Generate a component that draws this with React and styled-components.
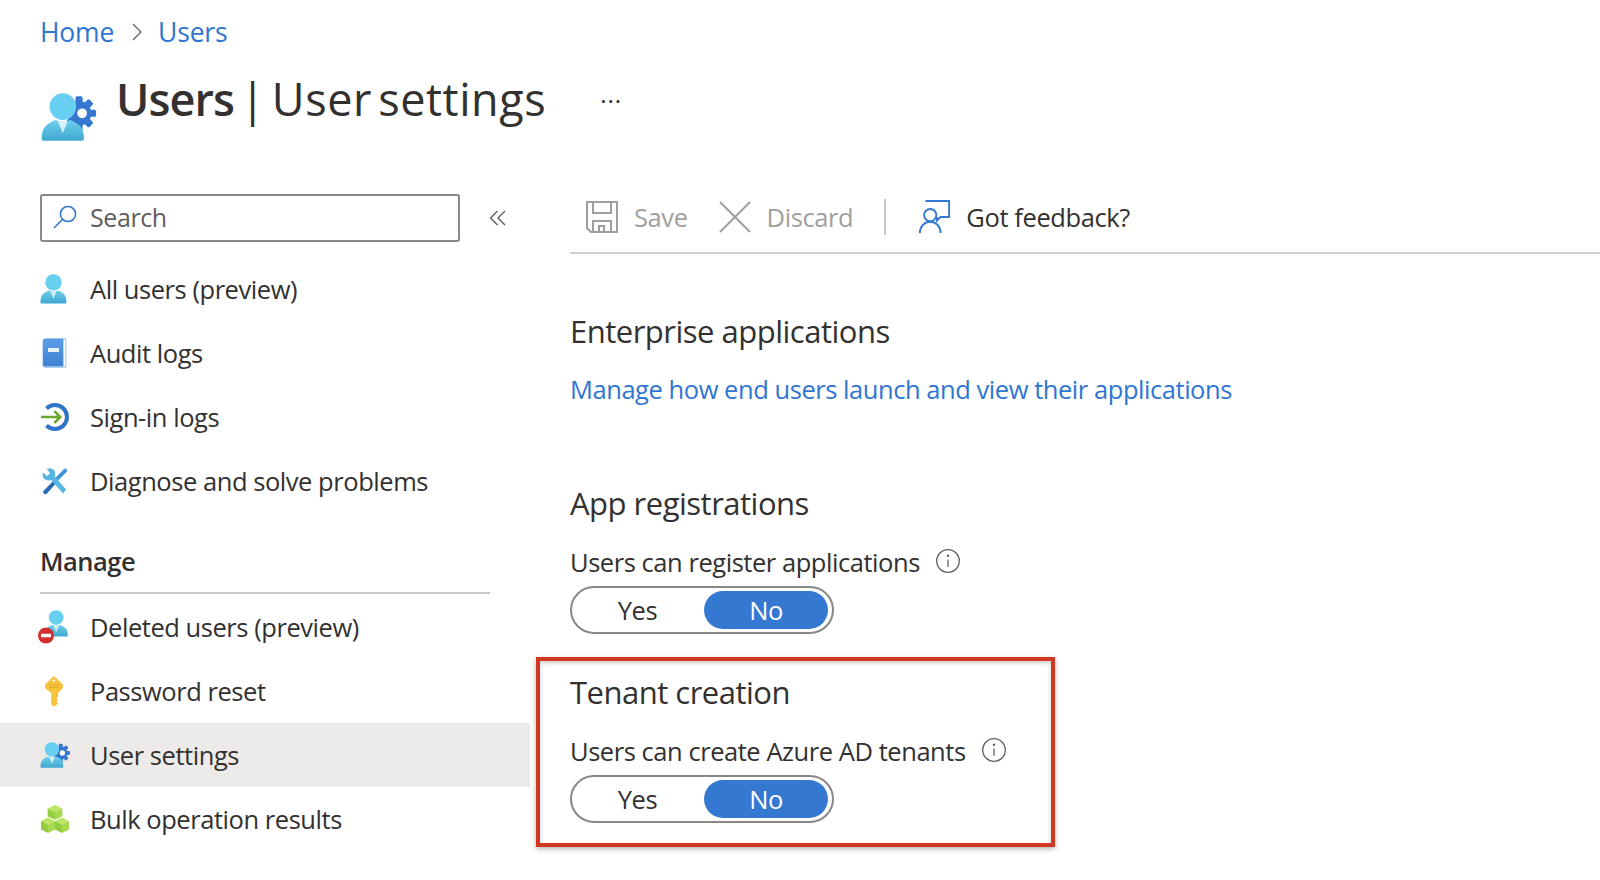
import { createGlobalStyle } from 'styled-components';
import styled from 'styled-components';

const GlobalStyle = createGlobalStyle`
  html, body {
    margin: 0;
    padding: 0;
    background: #fff;
    font-family: "Open Sans", "Noto Sans", sans-serif;
    color: #323130;
    overflow: hidden;
  }
`;

const Page = styled.div`
  width: 1600px;
  height: 880px;
  overflow: hidden;
`;

const Crumbs = styled.nav`
  display: flex;
  align-items: center;
  height: 64px;
  padding-left: 40px;
  font-size: 26.5px;
  letter-spacing: -0.2px;
  color: #2f76d2;
`;

const CrumbSep = styled.svg`
  width: 14px;
  height: 22px;
  margin: 0 14px 0 16px;
  fill: none;
  stroke: #605e5c;
  stroke-width: 1.3;
`;

const TitleBar = styled.header`
  display: flex;
  align-items: flex-start;
  height: 130px;
  padding-left: 40px;
`;

const TitleIcon = styled.div`
  width: 57px;
  height: 48px;
  margin: 29px 19px 0 0;
  flex: none;
`;

const Title = styled.h1`
  margin: 5px 0 0;
  font-size: 45px;
  line-height: 60px;
  font-weight: 400;
  letter-spacing: 0.55px;
  word-spacing: -6px;
  color: #323130;

  b {
    font-weight: 600;
    letter-spacing: -0.9px;
  }
`;

const Ellipsis = styled.span`
  margin: 10px 0 0 54px;
  font-size: 24px;
  line-height: 40px;
  letter-spacing: 1px;
  color: #323130;
`;

const Body = styled.div`
  display: grid;
  grid-template-columns: 530px 1fr;
`;

const Sidebar = styled.aside`
  display: flex;
  flex-direction: column;
`;

const SearchRow = styled.div`
  display: flex;
  align-items: center;
  padding-left: 40px;
  margin-bottom: 15px;
`;

const SearchBox = styled.div`
  display: flex;
  align-items: center;
  gap: 12px;
  box-sizing: border-box;
  width: 420px;
  height: 48px;
  padding: 0 0 2px 10px;
  border: 2px solid #8a8886;
  border-radius: 3px;
  font-size: 25px;
  letter-spacing: -0.4px;
  color: #605e5c;
`;

const Collapse = styled.svg`
  width: 18px;
  height: 16px;
  margin-left: 29px;
  fill: none;
  stroke: #605e5c;
  stroke-width: 1.4;
`;

const Row = styled.div`
  display: flex;
  align-items: center;
  height: 64px;
  padding-left: 40px;
  font-size: 25.5px;
  letter-spacing: -0.45px;
  color: #323130;
  background: ${(props) => (props.$active ? '#edebe9' : 'transparent')};
`;

const RowIcon = styled.span`
  display: flex;
  align-items: center;
  width: 28px;
  height: 34px;
  margin-right: 22px;
  flex: none;

  svg {
    overflow: visible;
  }
`;

const GroupTitle = styled.div`
  box-sizing: border-box;
  display: flex;
  align-items: center;
  width: 450px;
  height: 56px;
  margin: 25px 0 1px 40px;
  padding-bottom: 8px;
  border-bottom: 2px solid #c8c6c4;
  font-size: 25.5px;
  font-weight: 600;
  letter-spacing: -0.5px;
`;

const Main = styled.main`
  display: flex;
  flex-direction: column;
  padding-left: 40px;
`;

const Toolbar = styled.div`
  display: flex;
  align-items: center;
  box-sizing: border-box;
  height: 60px;
  padding: 0 0 12px 15px;
  border-bottom: 2px solid #d2d0ce;
  font-size: 25.5px;
  letter-spacing: -0.4px;
`;

const ToolButton = styled.span`
  display: flex;
  align-items: center;
  margin-left: ${(props) => props.$gap || 0}px;
  color: ${(props) => (props.$disabled ? '#a19f9d' : '#323130')};
`;

const ToolIcon = styled.svg`
  width: 34px;
  height: 34px;
  margin-right: 15px;
  flex: none;
`;

const ToolDivider = styled.span`
  width: 2px;
  height: 36px;
  margin: 0 31px;
  background: #c8c6c4;
`;

const Section = styled.section`
  position: relative;
  display: flex;
  flex-direction: column;
  align-items: flex-start;
  padding-top: ${(props) => props.$top}px;
`;

const Heading = styled.h2`
  margin: 0;
  font-size: 31px;
  line-height: 42px;
  font-weight: 400;
  letter-spacing: -0.5px;
  color: #323130;
`;

const ManageLink = styled.a`
  margin-top: 17px;
  font-size: 25.5px;
  line-height: 40px;
  letter-spacing: -0.45px;
  color: #2f76d2;
`;

const FieldLabel = styled.div`
  display: flex;
  align-items: center;
  height: 40px;
  margin-top: 18px;
  font-size: 25.5px;
  letter-spacing: -0.45px;
  color: #323130;
`;

const InfoIcon = styled.svg`
  width: 26px;
  height: 26px;
  margin: -2px 0 0 ${(props) => props.$gap}px;
  fill: none;
  stroke: #605e5c;
  stroke-width: 1.3;
`;

const Toggle = styled.div`
  display: flex;
  align-items: center;
  box-sizing: border-box;
  width: 264px;
  height: 48px;
  margin-top: 4px;
  padding: 0 4px 0 3px;
  border: 2px solid #8a8886;
  border-radius: 24px;
  font-size: 25.5px;
  letter-spacing: -0.4px;
`;

const ToggleOption = styled.span`
  display: flex;
  flex: ${(props) => (props.$on ? '0 0 124px' : '1')};
  align-items: center;
  justify-content: center;
  box-sizing: border-box;
  height: 38px;
  padding-right: ${(props) => (props.$on ? 0 : 4)}px;
  border-radius: 19px;
  background: ${(props) => (props.$on ? '#3478d1' : 'transparent')};
  color: ${(props) => (props.$on ? '#fff' : '#323130')};
`;

const Callout = styled.div`
  position: absolute;
  top: 23px;
  left: -34px;
  box-sizing: border-box;
  width: 519px;
  height: 190px;
  border: 4px solid #d0391f;
  box-shadow: 0 2px 5px rgba(0, 0, 0, 0.3), inset 0 2px 4px rgba(0, 0, 0, 0.2);
  pointer-events: none;
`;

function PersonShape({ prefix }) {
  return (
    <>
      <defs>
        <linearGradient id={`${prefix}-body`} x1="0" y1="0" x2="0" y2="1">
          <stop offset="0" stopColor="#6fd0ee" />
          <stop offset="1" stopColor="#3fa7cf" />
        </linearGradient>
      </defs>
      <path d="M0.5 28.4C.5 23.2 1.6 19.4 9 16.6c2.8 1.4 6.2 1.4 9 0 7.4 2.8 8.5 6.6 8.5 11.8 0 .6-.4 1-1 1h-24c-.6 0-1-.4-1-1z" fill={`url(#${prefix}-body)`} />
      <circle cx="13.5" cy="8.4" r="8.2" fill="#68cff0" />
      <path d="M10.4 17.2h6.2l-3.1 7.6z" fill="#d3f0f8" />
    </>
  );
}

function PersonIcon() {
  return (
    <svg width="28" height="30" viewBox="0 0 28 30">
      <PersonShape prefix="all" />
    </svg>
  );
}

function GearPersonIcon({ prefix, width, height }) {
  return (
    <svg width={width} height={height} viewBox="0 0 34 29.6">
      <g fill="#3478d1">
        <circle cx="23.5" cy="12.5" r="7.6" />
        <rect x="21.3" y="2" width="4.4" height="21" rx="1" />
        <rect x="13" y="10.3" width="21" height="4.4" rx="1" />
        <rect x="21.3" y="2" width="4.4" height="21" rx="1" transform="rotate(45 23.5 12.5)" />
        <rect x="21.3" y="2" width="4.4" height="21" rx="1" transform="rotate(-45 23.5 12.5)" />
      </g>
      <circle cx="25.4" cy="12.5" r="3" fill="#fff" />
      <PersonShape prefix={prefix} />
    </svg>
  );
}

function BookIcon() {
  return (
    <svg width="28" height="30" viewBox="0 0 28 30">
      <defs>
        <linearGradient id="book-cover" x1="0" y1="0" x2="0" y2="1">
          <stop offset="0" stopColor="#5c9fe8" />
          <stop offset="1" stopColor="#3f80d2" />
        </linearGradient>
      </defs>
      <path d="M3 3.2C3 1.6 4 .7 5.4.7h20.4v28.6H5C3.8 29.3 3 28.4 3 27z" fill="#fff" stroke="#7fb2e6" strokeWidth="0.8" />
      <path d="M3 3c0-1.4 1-2.3 2.4-2.3h18v27.8H5c-1.2 0-2-.8-2-2.2z" fill="url(#book-cover)" />
      <rect x="8" y="10" width="11" height="4" fill="#e8f2fc" />
    </svg>
  );
}

function SignInIcon() {
  return (
    <svg width="28" height="30" viewBox="0 0 28 30" fill="none">
      <path d="M6.5 6.5A12 12 0 1 1 6.5 23.5" stroke="#2f76c8" strokeWidth="4" />
      <path d="M1 15h19M14.4 9.2l5.8 5.8-5.8 5.8" stroke="#6aa82e" strokeWidth="2.6" />
    </svg>
  );
}

function ToolsIcon() {
  return (
    <svg width="28" height="30" viewBox="0 0 28 30">
      <path d="M26.5 2.4 27 5.6 17 15.6l-2.6-2.6L24 3z" fill="#3f90d6" />
      <path d="M13.5 14.8 16 17.3 7 27.5c-1 .9-2.4.9-3.2 0s-.8-2.2 0-3z" fill="#2a6ab5" />
      <path d="M3 6.5 7 10l3.2-3L6.8 3c3-1.4 6.2-.5 7.7 2 1 1.8.9 3.8.2 5.2L26 23.4l-2.8 4.2L11 14c-2.6.9-5.6.4-7.2-1.7C2.6 10.6 2.4 8.4 3 6.5z" fill="#55b7e2" />
    </svg>
  );
}

function DeletedIcon() {
  return (
    <svg width="28" height="34" viewBox="0 0 28 34">
      <g transform="translate(4 0) scale(0.9)">
        <PersonShape prefix="deleted" />
      </g>
      <circle cx="6" cy="25.5" r="8" fill="#d32f2f" />
      <rect x="1" y="23.8" width="10" height="3.4" rx="0.6" fill="#fff" />
    </svg>
  );
}

function KeyIcon() {
  return (
    <svg width="28" height="32" viewBox="0 0 28 32">
      <path d="M14 1.4 22.4 9.6v3.4L17.6 18v4l-1.6 1.6 1.6 1.6-1.6 1.6 1.6 1.6L14.4 31h-1l-1.6-1.6V18L5.6 13V9.6z" fill="#f8c33c" stroke="#f8c33c" strokeLinejoin="round" />
      <circle cx="14" cy="5.6" r="1.2" fill="#fff" />
      <path d="M9.5 10.2h9M9.5 12.6h9" stroke="#e3a52a" strokeWidth="1" />
    </svg>
  );
}

function CubesIcon() {
  return (
    <svg width="30" height="30" viewBox="0 0 30 30">
      <path d="M15 1l7.4 3.6L15 8.2 7.6 4.6z" fill="#bde665" />
      <path d="M7.6 4.6 15 8.2v7.6l-7.4-3.6z" fill="#94cc42" />
      <path d="M22.4 4.6 15 8.2v7.6l7.4-3.6z" fill="#a9d951" />
      <path d="M8 13.6l7 3.4-7 3.4-7-3.4z" fill="#bde665" />
      <path d="M1 17l7 3.4V29l-7-3.4z" fill="#94cc42" />
      <path d="M15 17l-7 3.4V29l7-3.4z" fill="#a9d951" />
      <path d="M22 13.6l7 3.4-7 3.4-7-3.4z" fill="#bde665" />
      <path d="M15 17l7 3.4V29l-7-3.4z" fill="#94cc42" />
      <path d="M29 17l-7 3.4V29l7-3.4z" fill="#a9d951" />
    </svg>
  );
}

function Info({ gap }) {
  return (
    <InfoIcon $gap={gap} viewBox="0 0 26 26">
      <circle cx="13" cy="13" r="11.3" />
      <path d="M13 11.4v7.4" />
      <circle cx="13" cy="7.8" r="0.6" />
    </InfoIcon>
  );
}

function YesNo() {
  return (
    <Toggle>
      <ToggleOption>Yes</ToggleOption>
      <ToggleOption $on>No</ToggleOption>
    </Toggle>
  );
}

const topItems = [
  { label: 'All users (preview)', icon: <PersonIcon /> },
  { label: 'Audit logs', icon: <BookIcon /> },
  { label: 'Sign-in logs', icon: <SignInIcon /> },
  { label: 'Diagnose and solve problems', icon: <ToolsIcon /> }
];

const manageItems = [
  { label: 'Deleted users (preview)', icon: <DeletedIcon /> },
  { label: 'Password reset', icon: <KeyIcon /> },
  { label: 'User settings', icon: <GearPersonIcon prefix="nav" width="30" height="26" />, active: true },
  { label: 'Bulk operation results', icon: <CubesIcon /> }
];

export default function App() {
  return (
    <Page>
      <GlobalStyle />
      <Crumbs>
        <span>Home</span>
        <CrumbSep viewBox="0 0 14 22">
          <path d="M3 3l8 8-8 8" />
        </CrumbSep>
        <span>Users</span>
      </Crumbs>
      <TitleBar>
        <TitleIcon>
          <GearPersonIcon prefix="title" width="57" height="48" />
        </TitleIcon>
        <Title>
          <b>Users</b> | User settings
        </Title>
        <Ellipsis>...</Ellipsis>
      </TitleBar>
      <Body>
        <Sidebar>
          <SearchRow>
            <SearchBox>
              <svg width="26" height="26" viewBox="0 0 26 26" fill="none" stroke="#2f76d2" strokeWidth="1.5">
                <circle cx="16" cy="10" r="7.6" />
                <path d="M10.4 15.4 2 24" />
              </svg>
              Search
            </SearchBox>
            <Collapse viewBox="0 0 18 16">
              <path d="M8.5 1 1.5 8l7 7M16 1 9 8l7 7" />
            </Collapse>
          </SearchRow>
          {topItems.map((item) => (
            <Row key={item.label}>
              <RowIcon>{item.icon}</RowIcon>
              {item.label}
            </Row>
          ))}
          <GroupTitle>Manage</GroupTitle>
          {manageItems.map((item) => (
            <Row key={item.label} $active={item.active}>
              <RowIcon>{item.icon}</RowIcon>
              {item.label}
            </Row>
          ))}
        </Sidebar>
        <Main>
          <Toolbar>
            <ToolButton $disabled>
              <ToolIcon viewBox="0 0 34 34" fill="none" stroke="#a19f9d" strokeWidth="2">
                <path d="M2 2h30v30H6l-4-4z" />
                <path d="M8 2v11h18V2M8 32V21h18v11M14 32v-6h5v6" />
              </ToolIcon>
              Save
            </ToolButton>
            <ToolButton $disabled $gap={30}>
              <ToolIcon viewBox="0 0 34 34" fill="none" stroke="#a19f9d" strokeWidth="2">
                <path d="M2 2l30 30M32 2 2 32" />
              </ToolIcon>
              Discard
            </ToolButton>
            <ToolDivider />
            <ToolButton>
              <ToolIcon viewBox="0 0 34 36" fill="none" stroke="#3478d1" strokeWidth="2">
                <path d="M9 2V1h24v17h-9l-4 4v-4" />
                <circle cx="13" cy="16" r="6.5" />
                <path d="M2 35c0-7 5-12 11-12s11 5 11 12" />
              </ToolIcon>
              Got feedback?
            </ToolButton>
          </Toolbar>
          <Section $top={56}>
            <Heading>Enterprise applications</Heading>
            <ManageLink>Manage how end users launch and view their applications</ManageLink>
          </Section>
          <Section $top={73}>
            <Heading>App registrations</Heading>
            <FieldLabel>
              Users can register applications
              <Info gap={15} />
            </FieldLabel>
            <YesNo />
          </Section>
          <Section $top={37}>
            <Callout />
            <Heading>Tenant creation</Heading>
            <FieldLabel>
              Users can create Azure AD tenants
              <Info gap={15} />
            </FieldLabel>
            <YesNo />
          </Section>
        </Main>
      </Body>
    </Page>
  );
}
